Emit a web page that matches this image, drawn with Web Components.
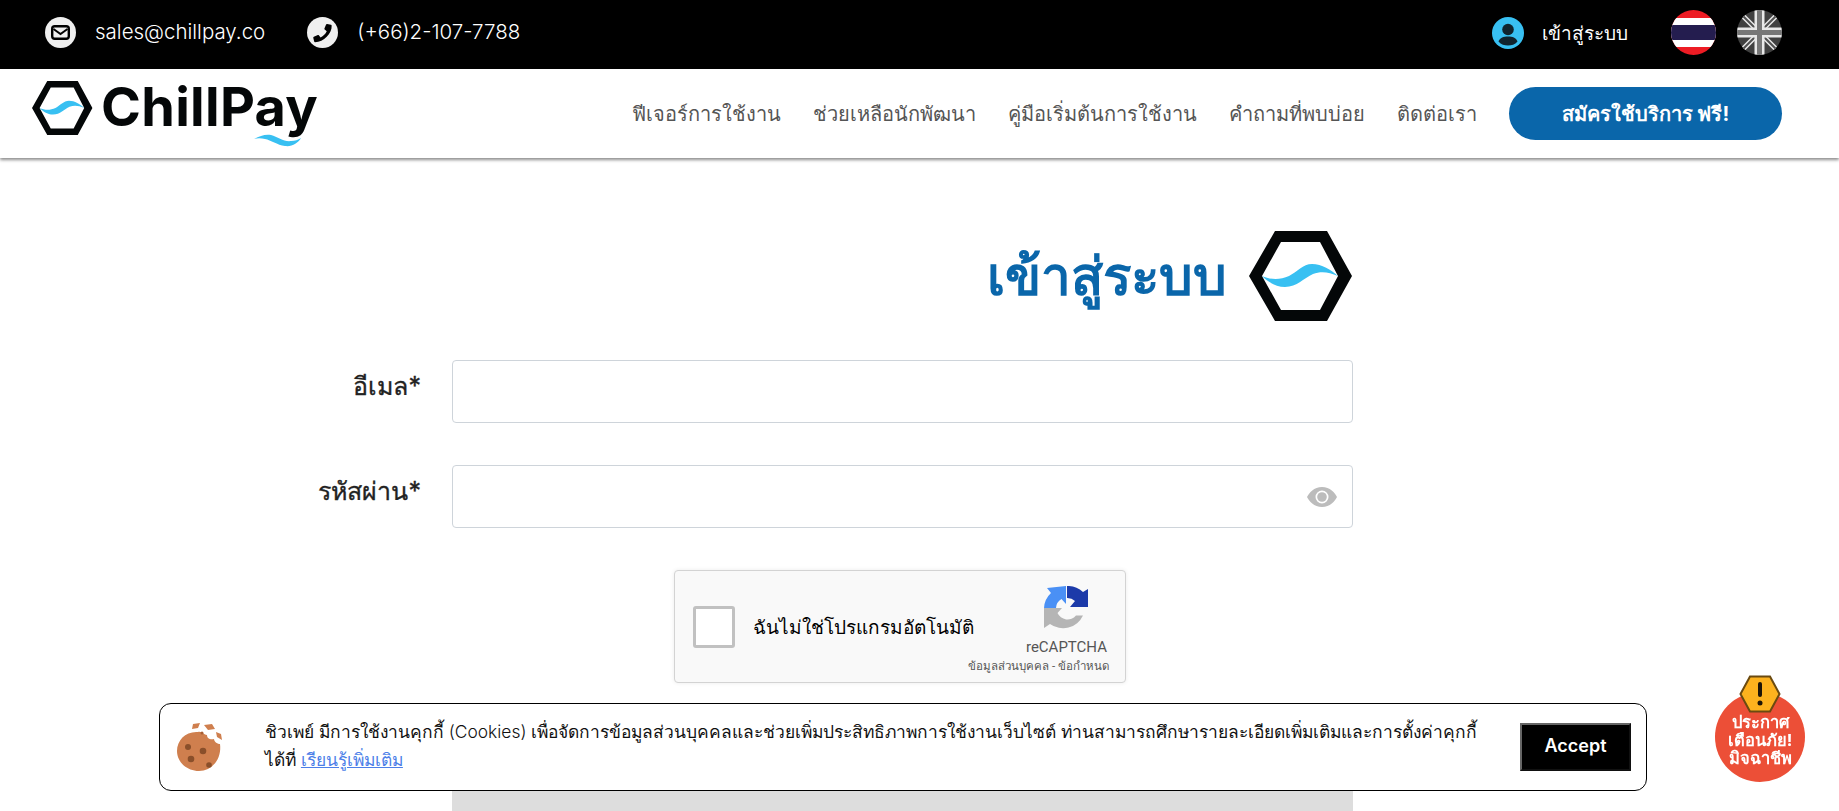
<!DOCTYPE html>
<html lang="th">
<head>
<meta charset="utf-8">
<title>ChillPay</title>
<style>
  html, body { margin: 0; height: 811px; overflow: hidden; background: #fff; }
  body { font-family: Inter, "Noto Sans", sans-serif; }
</style>
</head>
<body>
<top-bar></top-bar>
<main-nav>
  <a slot="links">ฟีเจอร์การใช้งาน</a>
  <a slot="links">ช่วยเหลือนักพัฒนา</a>
  <a slot="links">คู่มือเริ่มต้นการใช้งาน</a>
  <a slot="links">คำถามที่พบบ่อย</a>
  <a slot="links">ติดต่อเรา</a>
</main-nav>
<login-form></login-form>
<cookie-bar></cookie-bar>
<scam-badge></scam-badge>

<script>
const FONT = `Inter, "Noto Sans", sans-serif`;

class ChillHex extends HTMLElement {
    constructor() {
        super();
        this.shadowDOM = this.attachShadow({mode: "open"});
        this.render();
    }
    render() {
        this.shadowDOM.innerHTML = `
    <style>
    :host{ display:block; width:var(--w,104px); height:var(--h,90px); flex:none; }
    svg{ display:block; width:100%; height:100%; }
    </style>
    <svg viewBox="0 0 104 90" preserveAspectRatio="none">
      <path fill="#040708" fill-rule="evenodd" d="M0 45 26 0H78L103 45 78 90H26ZM13 45 32 11H71L89 45 71 79H32Z"/>
      <path fill="#38c0f2" d="M13 45C22 49 31 49 40 45 48 41 54 33 63 33 73 33 82 39 89 45 80 41 72 40 64 43 55 47 48 56 36 56 26 56 18 50 13 45Z"/>
    </svg>`;
    }
}
customElements.define("chill-hex", ChillHex);

class TopBar extends HTMLElement {
    constructor() {
        super();
        this.shadowDOM = this.attachShadow({mode: "open"});
        this.render();
    }
    render() {
        this.shadowDOM.innerHTML = `
    <style>
    :host{ display:flex; align-items:center; justify-content:space-between; height:69px; background:#000; color:#fff;
           padding:0 57px 4px 45px; box-sizing:border-box; font-family:${FONT}; font-size:20.500px; font-weight:300; }
    .side{ display:flex; align-items:center; }
    .item{ display:flex; align-items:center; gap:19px; margin-right:42px; }
    .item span + span{ padding-bottom:2px; }
    .ic{ width:31px; height:31px; border-radius:50%; background:#efefef; display:flex; align-items:center; justify-content:center; flex:none; }
    .login{ display:flex; align-items:center; gap:18px; margin-right:43px; font-size:19px; }
    .flag{ width:45px; height:45px; display:block; border-radius:50%; }
    .flag + .flag{ margin-left:21px; }
    </style>
    <div class="side">
      <div class="item"><span class="ic">
        <svg width="19" height="15" viewBox="0 0 19 15"><rect x="1.200" y="1.200" width="16.600" height="12.600" rx="2.500" fill="#efefef" stroke="#000" stroke-width="2.400"/><path d="M2.500 4 9.500 9 16.500 4" fill="none" stroke="#000" stroke-width="2"/></svg>
      </span><span>sales@chillpay.co</span></div>
      <div class="item"><span class="ic">
        <svg width="20" height="20" viewBox="0 0 24 24"><path fill="#000" d="M21.500 2.200 17 1.100c-.6-.1-1.100.2-1.300.7l-2 4.800c-.2.4-.1.9.3 1.200l2.500 2.100c-1.500 3.200-4.100 5.800-7.400 7.400l-2.100-2.500c-.3-.4-.8-.5-1.200-.3l-4.800 2c-.5.2-.8.800-.7 1.300l1.100 4.500c.1.5.6.9 1.100.9C12.800 22.700 22.900 12.600 22.400 3.300c0-.5-.4-1-.9-1.100Z"/></svg>
      </span><span>(+66)2-107-7788</span></div>
    </div>
    <div class="side">
      <div class="login">
        <svg width="32" height="32" viewBox="0 0 32 32"><circle cx="16" cy="16" r="16" fill="#38c0f2"/><circle cx="16" cy="12.500" r="5.800" fill="#10242e"/><path fill="#10242e" d="M6.500 24.500C8 20.500 11.500 19.500 16 19.500s8 1 9.500 5C23 27.500 19.500 28.500 16 28.500s-7-1-9.500-4Z"/></svg>
        เข้าสู่ระบบ
      </div>
      <svg class="flag" viewBox="0 0 45 45">
        <rect width="45" height="45" fill="#ed1c24"/><rect y="8" width="45" height="29" fill="#fff"/><rect y="15" width="45" height="15" fill="#241d4f"/>
      </svg>
      <svg class="flag" viewBox="0 0 45 45">
        <rect width="45" height="45" fill="#404040"/>
        <path d="M0 0 45 45M45 0 0 45" stroke="#e8e8e8" stroke-width="5"/>
        <path d="M0 0 45 45M45 0 0 45" stroke="#505050" stroke-width="2"/>
        <path d="M22.500 0V45M0 22.500H45" stroke="#e8e8e8" stroke-width="10"/>
        <path d="M22.500 0V45M0 22.500H45" stroke="#777" stroke-width="5"/>
      </svg>
    </div>`;
    }
}
customElements.define("top-bar", TopBar);

class MainNav extends HTMLElement {
    constructor() {
        super();
        this.shadowDOM = this.attachShadow({mode: "open"});
        this.render();
    }
    render() {
        this.shadowDOM.innerHTML = `
    <style>
    :host{ display:flex; align-items:center; justify-content:space-between; height:89px; background:#fff;
           padding:0 57px 0 32px; box-sizing:border-box; box-shadow:0 2px 3px rgba(0,0,0,.45); position:relative;
           font-family:${FONT}; }
    .logo{ display:flex; align-items:flex-start; gap:8px; position:relative; --w:61px; --h:54px; padding-bottom:12px; }
    .word{ font-family:Inter, "Liberation Sans", sans-serif; font-weight:700; font-size:54px; line-height:52px; color:#040708; letter-spacing:.3px; }
    .wave{ position:absolute; left:222px; top:52px; }
    .links{ display:flex; align-items:center; gap:32px; font-size:20px; color:#555; }
    ::slotted(a){ color:#555; white-space:nowrap; }
    .cta{ width:273px; height:53px; border-radius:27px; background:#0a66aa; color:#fff; font-size:20px; font-weight:700;
          display:flex; align-items:center; justify-content:center; }
    </style>
    <div class="logo">
      <chill-hex></chill-hex>
      <span class="word">ChillPay</span>
      <svg class="wave" width="47" height="14" viewBox="0 0 47 14"><path fill="#38c0f2" d="M0 6C6 3 11 1 17 2 24 4 30 9 37 8 41 8 44 7 47 5 44 10 38 14 31 13 23 12 17 7 11 6 7 5 3 5 0 6Z"/></svg>
    </div>
    <div class="links">
      <slot name="links"></slot>
      <div class="cta">สมัครใช้บริการ ฟรี!</div>
    </div>`;
    }
}
customElements.define("main-nav", MainNav);

class FormRow extends HTMLElement {
    constructor() {
        super();
        this.shadowDOM = this.attachShadow({mode: "open"});
        this.render();
    }
    render() {
        const eye = this.hasAttribute("eye") ? `
      <svg class="eye" width="30" height="20" viewBox="0 0 30 20"><path fill="#bcbcbc" fill-rule="evenodd" d="M15 0C23 0 28 6 30 10 28 14 23 20 15 20S2 14 0 10C2 6 7 0 15 0ZM15 3.500A6.500 6.500 0 1 0 15 16.500 6.500 6.500 0 1 0 15 3.500Z"/><circle cx="15" cy="10" r="4.800" fill="#bcbcbc"/></svg>` : "";
        this.shadowDOM.innerHTML = `
    <style>
    :host{ display:grid; grid-template-columns:421px 901px; column-gap:31px; align-items:start; }
    label{ text-align:right; font-size:25px; font-weight:400; -webkit-text-stroke:.35px #222; color:#222; padding-top:7px; line-height:38px; }
    .box{ height:63px; box-sizing:border-box; border:1px solid #ced4da; border-radius:4px; background:#fff; display:flex; align-items:center; justify-content:flex-end; padding-right:15px; }
    </style>
    <label><slot></slot></label>
    <div class="box">${eye}</div>`;
    }
}
customElements.define("form-row", FormRow);

class CaptchaBox extends HTMLElement {
    constructor() {
        super();
        this.shadowDOM = this.attachShadow({mode: "open"});
        this.render();
    }
    render() {
        this.shadowDOM.innerHTML = `
    <style>
    :host{ display:flex; align-items:center; width:452px; height:113px; box-sizing:border-box; background:#f9f9f9; border:1px solid #d3d3d3;
           border-radius:4px; box-shadow:0 0 4px rgba(0,0,0,.08); padding:0 18px; font-family:Roboto, "Noto Sans", sans-serif; }
    .check{ width:42px; height:42px; box-sizing:border-box; background:#fff; border:3px solid #c1c1c1; border-radius:3px; flex:none; }
    .label{ margin-left:18px; font-size:19px; color:#000; white-space:nowrap; flex:1 1 0; min-width:0; }
    .brand{ display:flex; flex-direction:column; align-items:flex-end; align-self:stretch; padding-top:15px; }
    .mark{ display:block; margin-right:17px; }
    .name{ font-size:15px; color:#555; line-height:18px; margin-top:6px; }
    .small{ font-size:11.500px; color:#555; line-height:14px; margin-top:3px; margin-right:-2px; white-space:nowrap; }
    </style>
    <div class="check"></div>
    <div class="label">ฉันไม่ใช่โปรแกรมอัตโนมัติ</div>
    <div class="brand">
      <svg class="mark" width="46" height="46" viewBox="0 0 46 46">
        <path fill="#b5b5b5" d="M0 22H18L13.500 27A11 11 0 0 0 32 29.500H39A22 22 0 0 1 6 38L0 42Z"/>
        <path fill="#4a90f5" d="M22 0V18L17.500 13A11 11 0 0 0 12 22H0A22 22 0 0 1 7 7L3 2Z"/>
        <path fill="#1c3aa9" d="M23 0A22 22 0 0 1 39 6L44 3V21H26L31 15A11 11 0 0 0 23 12Z"/>
      </svg>
      <div class="name">reCAPTCHA</div>
      <div class="small">ข้อมูลส่วนบุคคล - ข้อกำหนด</div>
    </div>`;
    }
}
customElements.define("captcha-box", CaptchaBox);

class LoginForm extends HTMLElement {
    constructor() {
        super();
        this.shadowDOM = this.attachShadow({mode: "open"});
        this.render();
    }
    render() {
        this.shadowDOM.innerHTML = `
    <style>
    :host{ display:block; font-family:${FONT}; }
    .wrap{ width:1353px; padding-top:73px; }
    .title{ display:flex; justify-content:flex-end; align-items:center; gap:22px; height:90px; margin-bottom:39px; }
    h1{ margin:0; font-size:53px; font-weight:700; color:#0a66aa; line-height:90px; }
    form-row{ margin-bottom:42px; }
    .cap{ display:flex; margin:0 0 0 674px; }
    .submit{ margin:108px 0 0 452px; height:60px; background:#ddd; }
    </style>
    <div class="wrap">
      <div class="title"><h1>เข้าสู่ระบบ</h1><chill-hex></chill-hex></div>
      <form-row>อีเมล*</form-row>
      <form-row eye>รหัสผ่าน*</form-row>
      <div class="cap"><captcha-box></captcha-box></div>
      <div class="submit"></div>
    </div>`;
    }
}
customElements.define("login-form", LoginForm);

class CookieBar extends HTMLElement {
    constructor() {
        super();
        this.shadowDOM = this.attachShadow({mode: "open"});
        this.render();
    }
    render() {
        this.shadowDOM.innerHTML = `
    <style>
    :host{ position:fixed; left:159px; top:703px; width:1488px; height:88px; box-sizing:border-box; background:#fff; border:1px solid #000;
           border-radius:12px; display:flex; align-items:center; padding:0 15px 0 16px; font-family:${FONT}; }
    .cookie{ flex:none; width:48px; height:50px; margin-right:41px; }
    p{ margin:0 0 2px; flex:1; font-size:17.400px; line-height:28px; color:#111; font-weight:300; white-space:nowrap; }
    a{ color:#4d7fe8; text-decoration:underline; }
    button{ flex:none; width:111px; height:48px; margin-left:40px; background:#000; color:#fff; border:2px outset #666; font:600 18px ${FONT}; padding:0 0 3px; }
    </style>
    <svg class="cookie" viewBox="0 0 48 50">
      <path fill="#cf7f4e" d="M22 10C26 9 28 13 31 13 31 17 35 18 38 17 38 20 42 22 44 22 46 37 36 49 23 49 11 49 1 40 1 29 1 18 10 9 22 10Z"/>
      <path fill="#cf7f4e" d="M17 2 24 1 22 6 16 7ZM28 3 36 2 39 7 32 8ZM40 10 45 12 46 18 41 15Z"/>
      <circle cx="12" cy="25" r="3" fill="#8a4f2a"/><circle cx="27" cy="29" r="3.300" fill="#8a4f2a"/><circle cx="15" cy="37" r="3.300" fill="#8a4f2a"/><circle cx="33" cy="43" r="2.800" fill="#8a4f2a"/><circle cx="26" cy="11" r="1.500" fill="#a85f35"/>
    </svg>
    <p>ชิวเพย์ มีการใช้งานคุกกี้ (Cookies) เพื่อจัดการข้อมูลส่วนบุคคลและช่วยเพิ่มประสิทธิภาพการใช้งานเว็บไซต์ ท่านสามารถศึกษารายละเอียดเพิ่มเติมและการตั้งค่าคุกกี้<br>ได้ที่ <a>เรียนรู้เพิ่มเติม</a></p>
    <button>Accept</button>`;
    }
}
customElements.define("cookie-bar", CookieBar);

class ScamBadge extends HTMLElement {
    constructor() {
        super();
        this.shadowDOM = this.attachShadow({mode: "open"});
        this.render();
    }
    render() {
        this.shadowDOM.innerHTML = `
    <style>
    :host{ position:fixed; left:1715px; top:692px; width:90px; height:90px; border-radius:50%; background:#ec4f37; color:#fff;
           display:flex; flex-direction:column; align-items:center; justify-content:flex-end; padding-bottom:15px; box-sizing:border-box;
           font-family:${FONT}; font-size:16.500px; font-weight:700; line-height:18px; text-align:center; }
    svg{ position:absolute; left:24px; top:-17px; }
    </style>
    <svg width="42" height="38" viewBox="0 0 42 38">
      <path fill="#fdb21e" stroke="#6b4a10" stroke-width="2" d="M1.500 19 11 1.500H31L40.500 19 31 36.500H11Z"/>
      <rect x="19" y="7" width="4" height="15" rx="2" fill="#1c1408"/><circle cx="21" cy="28" r="2.500" fill="#1c1408"/>
    </svg>
    <div>ประกาศ</div><div>เตือนภัย!</div><div>มิจฉาชีพ</div>`;
    }
}
customElements.define("scam-badge", ScamBadge);
</script>
</body>
</html>
